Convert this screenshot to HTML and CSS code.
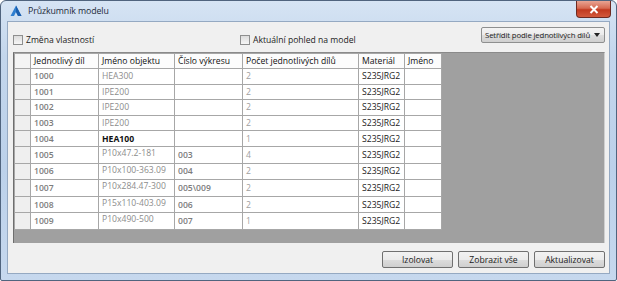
FILE: index.html
```html
<!DOCTYPE html>
<html lang="cs">
<head>
    <meta charset="UTF-8">
    <title>Průzkumník modelu</title>
    <link rel="stylesheet" href="styles.css">
</head>
<body>
    <div class="window">
        <div class="titlebar">
            <svg class="app-icon" width="12" height="12" viewBox="0 0 12 12">
                <path d="M6 0.5 L11.5 11 L8 11 L6 7 L4 11 L0.5 11 Z" fill="#2f7fd0"/>
                <path d="M6 0.5 L11.5 11 L8 11 L6 7 Z" fill="#1b5fae"/>
            </svg>
            <span class="title">Průzkumník modelu</span>
            <div class="close-btn">
                <svg width="10" height="9" viewBox="0 0 10 9">
                    <path d="M1.5 1 L8.5 8 M8.5 1 L1.5 8" stroke="#fff" stroke-width="2"/>
                </svg>
            </div>
        </div>
        <div class="client">
            <div class="toolbar">
                <label class="check"><span class="box"></span>Změna vlastností</label>
                <label class="check"><span class="box"></span>Aktuální pohled na model</label>
                <div class="dropdown">
                    <span class="dd-text">Setřídit podle jednotlivých dílů</span>
                    <span class="arrow"></span>
                </div>
            </div>
            <div class="grid-area">
                <table class="grid">
                    <colgroup>
                        <col class="c-rh"><col class="c-part"><col class="c-name"><col class="c-draw"><col class="c-count"><col class="c-mat"><col class="c-jm">
                    </colgroup>
                    <thead>
                        <tr>
                            <th class="rh"></th>
                            <th>Jednotlivý díl</th>
                            <th>Jméno objektu</th>
                            <th>Číslo výkresu</th>
                            <th>Počet jednotlivých dílů</th>
                            <th>Materiál</th>
                            <th>Jméno</th>
                        </tr>
                    </thead>
                    <tbody>
                        <tr><td class="rh"></td><td class="id">1000</td><td class="dim">HEA300</td><td></td><td class="light">2</td><td>S235JRG2</td><td></td></tr>
                        <tr><td class="rh"></td><td class="id">1001</td><td class="dim">IPE200</td><td></td><td class="light">2</td><td>S235JRG2</td><td></td></tr>
                        <tr><td class="rh"></td><td class="id">1002</td><td class="dim">IPE200</td><td></td><td class="light">2</td><td>S235JRG2</td><td></td></tr>
                        <tr><td class="rh"></td><td class="id">1003</td><td class="dim">IPE200</td><td></td><td class="light">2</td><td>S235JRG2</td><td></td></tr>
                        <tr><td class="rh"></td><td class="id">1004</td><td class="strong">HEA100</td><td></td><td class="light">1</td><td>S235JRG2</td><td></td></tr>
                        <tr><td class="rh"></td><td class="id">1005</td><td class="dim raised">P10x47.2-181</td><td class="id">003</td><td class="light">4</td><td>S235JRG2</td><td></td></tr>
                        <tr><td class="rh"></td><td class="id">1006</td><td class="dim raised">P10x100-363.09</td><td class="id">004</td><td class="light">2</td><td>S235JRG2</td><td></td></tr>
                        <tr><td class="rh"></td><td class="id">1007</td><td class="dim raised">P10x284.47-300</td><td class="id">005\009</td><td class="light">2</td><td>S235JRG2</td><td></td></tr>
                        <tr><td class="rh"></td><td class="id">1008</td><td class="dim raised">P15x110-403.09</td><td class="id">006</td><td class="light">2</td><td>S235JRG2</td><td></td></tr>
                        <tr><td class="rh"></td><td class="id">1009</td><td class="dim raised">P10x490-500</td><td class="id">007</td><td class="light">1</td><td>S235JRG2</td><td></td></tr>
                    </tbody>
                </table>
            </div>
            <div class="buttons">
                <button class="btn">Izolovat</button>
                <button class="btn">Zobrazit vše</button>
                <button class="btn">Aktualizovat</button>
            </div>
        </div>
    </div>
</body>
</html>
```

FILE: styles.css
```css
body {
    margin: 0;
    width: 617px;
    height: 281px;
    overflow: hidden;
    font-family: "Open Sans", "Noto Sans", sans-serif;
    font-size: 8.6px;
    color: #1a1a1a;
    background: #ffffff;
}
.window {
    box-sizing: border-box;
    width: 617px;
    height: 281px;
    border: 1px solid #50647e;
    border-radius: 6px 6px 2px 2px;
    background: linear-gradient(to bottom, #d6e4f4 0%, #c3d6ec 20%, #bcd1ea 60%, #c6d8ee 100%);
    padding: 0 6px 6px 6px;
    display: flex;
    flex-direction: column;
}
.titlebar {
    height: 20px;
    display: flex;
    align-items: center;
    padding-left: 3px;
}
.app-icon {
    margin-right: 6px;
}
.title {
    font-size: 8.8px;
    letter-spacing: -0.1px;
    color: #1e2a3a;
}
.close-btn {
    margin-left: auto;
    align-self: flex-start;
    width: 35px;
    height: 17px;
    margin-right: -1px;
    border: 1px solid #6d2a22;
    border-top: none;
    border-radius: 0 0 4px 4px;
    background: linear-gradient(to bottom, #e8a493 0%, #d66a52 45%, #c1391f 55%, #d2593c 100%);
    display: flex;
    align-items: center;
    justify-content: center;
    box-sizing: border-box;
}
.client {
    flex: 1;
    background: #f0f0f0;
    border: 1px solid #95a9c2;
    display: flex;
    flex-direction: column;
    padding: 0 4px 0 5px;
}
.toolbar {
    display: grid;
    grid-template-columns: 227px 1fr auto;
    align-items: start;
    height: 30px;
}
.check {
    display: flex;
    align-items: center;
    margin-top: 12px;
    color: #222;
}
.box {
    width: 8px;
    height: 8px;
    border: 1px solid #8e8f8f;
    background: linear-gradient(to bottom, #dcdcdc, #f6f6f6);
    margin-right: 3px;
}
.dropdown {
    margin-top: 5px;
    width: 124px;
    height: 16px;
    box-sizing: border-box;
    border: 1px solid #8e8f8f;
    border-radius: 2px;
    background: linear-gradient(to bottom, #f4f4f4 0%, #ebebeb 50%, #dddddd 51%, #cfcfcf 100%);
    display: flex;
    align-items: center;
    padding: 0 4px 0 3px;
    color: #1a1a1a;
    font-size: 7.8px;
    white-space: nowrap;
}
.dd-text {
    letter-spacing: -0.15px;
}
.arrow {
    margin-left: auto;
    flex-shrink: 0;
    width: 0;
    height: 0;
    border-left: 3px solid transparent;
    border-right: 3px solid transparent;
    border-top: 4px solid #222;
}
.grid-area {
    height: 191px;
    background: #a0a0a0;
    border-left: 1px solid #6e6e6e;
    border-top: 1px solid #8a8a8a;
    border-right: 1px solid #cfcfcf;
    box-sizing: border-box;
}
.grid {
    border-collapse: collapse;
    table-layout: fixed;
    width: 427px;
    background: #ffffff;
}
.c-rh { width: 16px; }
.c-part { width: 68px; }
.c-name { width: 76px; }
.c-draw { width: 68px; }
.c-count { width: 116px; }
.c-mat { width: 46px; }
.c-jm { width: 37px; }
.grid th,
.grid td {
    border: 1px solid #a7a7a7;
    padding: 0 3px;
    height: 14.6px;
    line-height: 12px;
    white-space: nowrap;
    overflow: hidden;
    text-align: left;
    font-weight: normal;
    color: #1a1a1a;
}
.grid th {
    height: 14px;
    background: #fcfcfc;
    color: #111;
}
.grid .rh {
    background: #efefef;
    padding: 0;
}
.grid th.rh {
    background: #f4f4f4;
}
.grid td.id {
    color: #7c7c7c;
    font-weight: 600;
}
.grid td.dim {
    color: #8c8c8c;
}
.grid td.light {
    color: #9e9e9e;
}
.grid td.strong {
    color: #111;
    font-weight: 700;
}
.grid td.raised {
    vertical-align: top;
    padding-top: 1px;
    line-height: 11px;
}
.buttons {
    display: flex;
    justify-content: flex-end;
    gap: 5px;
    margin-top: 8px;
}
.btn {
    width: 71px;
    height: 17px;
    padding: 0;
    font-family: "Open Sans", "Noto Sans", sans-serif;
    font-size: 8.6px;
    color: #1a1a1a;
    border: 1px solid #707070;
    border-radius: 2px;
    background: linear-gradient(to bottom, #f2f2f2 0%, #ebebeb 50%, #dddddd 51%, #cfcfcf 100%);
}
```
